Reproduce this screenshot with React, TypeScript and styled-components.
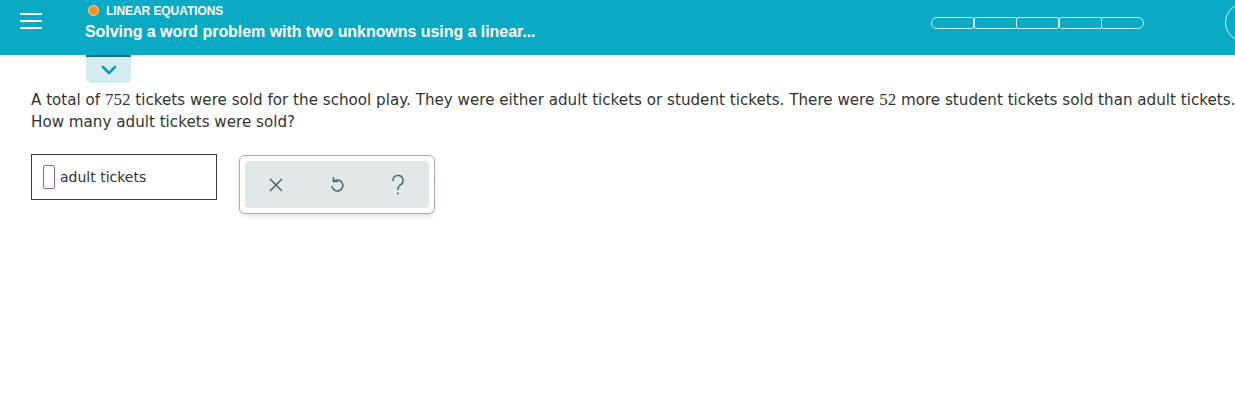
import React from "react";
import styled, { createGlobalStyle } from "styled-components";

const Global = createGlobalStyle`
  html, body {
    margin: 0;
    padding: 0;
    background: #fff;
    overflow: hidden;
  }
`;

const Page = styled.div`
  width: 1272px;
  min-height: 412px;
  font-family: "DejaVu Sans", Verdana, sans-serif;
`;

const Header = styled.header`
  height: 55px;
  background: #0aa9c4;
  display: flex;
  align-items: flex-start;
  color: #fff;
`;

const Burger = styled.button`
  width: 22px;
  margin: 13px 43px 0 20px;
  padding: 0;
  border: 0;
  background: none;
  display: flex;
  flex-direction: column;
  gap: 5px;
  span {
    height: 2px;
    border-radius: 1px;
    background: #fff;
  }
`;

const Titles = styled.div`
  display: flex;
  flex-direction: column;
  font-family: "Liberation Sans", Arial, sans-serif;
  font-weight: 700;
`;

const Topic = styled.div`
  display: flex;
  align-items: center;
  gap: 7px;
  margin: 3px 0 0 3px;
  font-size: 12px;
  letter-spacing: -0.08px;
  height: 15px;
`;

const Dot = styled.span`
  width: 11px;
  height: 11px;
  border-radius: 50%;
  background: #f7941d;
  border: 1px solid #ffd3a0;
  box-sizing: border-box;
`;

const Title = styled.h1`
  margin: 4px 0 0;
  font-size: 16px;
  font-weight: 700;
  letter-spacing: -0.05px;
  line-height: 20px;
`;

const Progress = styled.div`
  display: flex;
  margin: 17px 0 0 auto;
  height: 12px;
`;

const Segment = styled.span<{ pos: "first" | "mid" | "last" }>`
  width: 43px;
  box-sizing: border-box;
  border: 1.5px solid #c8f0f7;
  margin-left: ${(p) => (p.pos === "first" ? "0" : "-0.5px")};
  border-radius: ${(p) =>
    p.pos === "first" ? "6px 2px 2px 6px" : p.pos === "last" ? "2px 6px 6px 2px" : "2px"};
`;

const Avatar = styled.div`
  width: 37px;
  height: 37px;
  border-radius: 50%;
  border: 1.5px solid #c8f0f7;
  margin: 3px 8px 0 81px;
  flex-shrink: 0;
`;

const Tab = styled.div`
  width: 45px;
  height: 28px;
  margin-left: 86px;
  background: #d3edf3;
  border-top: 2px solid #1a6f80;
  border-radius: 0 0 5px 5px;
  box-sizing: border-box;
  display: flex;
  align-items: center;
  justify-content: center;
`;

const Body = styled.main`
  padding: 6px 0 0 31px;
`;

const Question = styled.p`
  margin: 0;
  font-size: 15.15px;
  line-height: 22px;
  color: #333;
  white-space: nowrap;
`;

const Num = styled.span`
  font-family: "Liberation Serif", serif;
  font-size: 17px;
`;

const Row = styled.div`
  display: flex;
  align-items: flex-start;
  gap: 22px;
  margin-top: 21px;
`;

const Answer = styled.div`
  width: 186px;
  height: 46px;
  box-sizing: border-box;
  border: 1px solid #3c3c3c;
  display: flex;
  align-items: center;
  padding-left: 11px;
  gap: 5px;
  font-size: 14px;
  color: #333;
`;

const Caret = styled.span`
  width: 12px;
  height: 24px;
  box-sizing: border-box;
  border: 1.5px solid #7b68d8;
  border-radius: 2px;
`;

const Tools = styled.div`
  margin-top: 1px;
  padding: 5px;
  border: 1px solid #a9b2b5;
  border-radius: 6px;
  background: #fff;
  box-shadow: 0 2px 4px rgba(0, 0, 0, 0.12);
`;

const ToolsInner = styled.div`
  width: 184px;
  height: 47px;
  background: #e2e8ea;
  border-radius: 4px;
  display: flex;
  align-items: center;
  justify-content: space-between;
  padding: 0 19px 0 19px;
  box-sizing: border-box;
`;

const Tool = styled.button`
  border: 0;
  background: none;
  padding: 0;
  width: 24px;
  height: 24px;
  display: flex;
  align-items: center;
  justify-content: center;
  color: #4d6670;
`;

export default function App() {
  return (
    <Page>
      <Global />
      <Header>
        <Burger aria-label="menu">
          <span />
          <span />
          <span />
        </Burger>
        <Titles>
          <Topic>
            <Dot />
            LINEAR EQUATIONS
          </Topic>
          <Title>Solving a word problem with two unknowns using a linear...</Title>
        </Titles>
        <Progress>
          <Segment pos="first" />
          <Segment pos="mid" />
          <Segment pos="mid" />
          <Segment pos="mid" />
          <Segment pos="last" />
        </Progress>
        <Avatar />
      </Header>
      <Tab>
        <svg width="16" height="10" viewBox="0 0 16 10">
          <path d="M2 2l6 6 6-6" fill="none" stroke="#0e9ab5" strokeWidth="2.6" strokeLinecap="round" strokeLinejoin="round" />
        </svg>
      </Tab>
      <Body>
        <Question>
          A total of <Num>752</Num> tickets were sold for the school play. They were either adult tickets or student
          tickets. There were <Num>52</Num> more student tickets sold than adult tickets.
          <br />
          How many adult tickets were sold?
        </Question>
        <Row>
          <Answer>
            <Caret />
            adult tickets
          </Answer>
          <Tools>
            <ToolsInner>
              <Tool aria-label="clear">
                <svg width="16" height="16" viewBox="0 0 16 16">
                  <path d="M2 2l12 12M14 2L2 14" stroke="currentColor" strokeWidth="1.6" />
                </svg>
              </Tool>
              <Tool aria-label="undo">
                <svg width="16" height="18" viewBox="0 0 16 18">
                  <path
                    d="M4.5 5.5 A5.5 5.5 0 1 1 3 10.5"
                    fill="none"
                    stroke="currentColor"
                    strokeWidth="1.5"
                    strokeLinecap="round"
                  />
                  <path d="M4.5 1.5v4h4" fill="none" stroke="currentColor" strokeWidth="1.5" strokeLinecap="round" strokeLinejoin="round" />
                </svg>
              </Tool>
              <Tool aria-label="help">
                <svg width="14" height="22" viewBox="0 0 14 22">
                  <path
                    d="M2 6.5 A5 5 0 1 1 9 11 C7.5 12 7 13 7 15.5"
                    fill="none"
                    stroke="currentColor"
                    strokeWidth="1.5"
                    strokeLinecap="round"
                  />
                  <circle cx="7" cy="19.5" r="1" fill="currentColor" />
                </svg>
              </Tool>
            </ToolsInner>
          </Tools>
        </Row>
      </Body>
    </Page>
  );
}
